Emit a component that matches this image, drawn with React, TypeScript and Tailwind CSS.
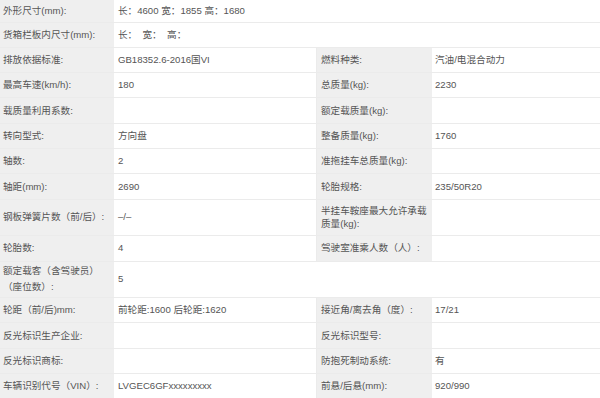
import React from "react";

type Row = {
  l1: React.ReactNode;
  v1?: React.ReactNode;
  l2?: React.ReactNode;
  v2?: React.ReactNode;
  span?: boolean;
  h: string;
  lh?: string;
};

const rows: Row[] = [
  { l1: "外形尺寸(mm):", v1: "长：4600 宽：1855 高：1680", span: true, h: "h-[22.6px]" },
  { l1: "货箱栏板内尺寸(mm):", v1: "长：  宽：  高：", span: true, h: "h-[25.3px]" },
  { l1: "排放依据标准:", v1: "GB18352.6-2016国VI", l2: "燃料种类:", v2: "汽油/电混合动力", h: "h-[25.3px]" },
  { l1: "最高车速(km/h):", v1: "180", l2: "总质量(kg):", v2: "2230", h: "h-[25.3px]" },
  { l1: "载质量利用系数:", v1: "", l2: "额定载质量(kg):", v2: "", h: "h-[25.3px]" },
  { l1: "转向型式:", v1: "方向盘", l2: "整备质量(kg):", v2: "1760", h: "h-[25.3px]" },
  { l1: "轴数:", v1: "2", l2: "准拖挂车总质量(kg):", v2: "", h: "h-[25.3px]" },
  { l1: "轴距(mm):", v1: "2690", l2: "轮胎规格:", v2: "235/50R20", h: "h-[25.3px]" },
  {
    l1: "钢板弹簧片数（前/后）:",
    v1: "–/–",
    l2: (
      <span className="block leading-[13.5px]">
        半挂车鞍座最大允许承载
        <br />
        质量(kg):
      </span>
    ),
    v2: "",
    h: "h-[36.6px]",
  },
  { l1: "轮胎数:", v1: "4", l2: "驾驶室准乘人数（人）:", v2: "", h: "h-[25.3px]" },
  {
    l1: (
      <span className="block leading-[16px]">
        额定载客（含驾驶员）
        <br />
        （座位数）:
      </span>
    ),
    v1: "5",
    span: true,
    h: "h-[36.6px]",
  },
  { l1: "轮距（前/后)mm:", v1: "前轮距:1600 后轮距:1620", l2: "接近角/离去角（度）:", v2: "17/21", h: "h-[25.3px]" },
  { l1: "反光标识生产企业:", v1: "", l2: "反光标识型号:", v2: "", h: "h-[25.3px]" },
  { l1: "反光标识商标:", v1: "", l2: "防抱死制动系统:", v2: "有", h: "h-[25.3px]" },
  { l1: "车辆识别代号（VIN）:", v1: "LVGEC6GFxxxxxxxxx", l2: "前悬/后悬(mm):", v2: "920/990", h: "h-[25.3px]" },
];

export default function App() {
  return (
    <div
      className="w-[600px] h-[398px] overflow-hidden bg-white text-[#555] text-[9.6px] leading-[12px]"
      style={{ fontFamily: '"Liberation Sans", "Noto Sans CJK SC", sans-serif' }}
    >
      {rows.map((r, i) => (
        <div
          key={i}
          className={`grid grid-cols-[114px_203px_115px_1fr] border-b border-[#ebebeb] box-border ${r.h}`}
        >
          <div className="bg-[#efefef] flex items-center pl-[3px] whitespace-pre">{r.l1}</div>
          {r.span ? (
            <div className="col-span-3 flex items-center pl-[4px] whitespace-pre">{r.v1}</div>
          ) : (
            <>
              <div className="flex items-center pl-[4px] whitespace-pre border-r border-[#ebebeb]">{r.v1}</div>
              <div className="bg-[#efefef] flex items-center pl-[4px] whitespace-pre">{r.l2}</div>
              <div className="flex items-center pl-[3px] whitespace-pre">{r.v2}</div>
            </>
          )}
        </div>
      ))}
    </div>
  );
}
